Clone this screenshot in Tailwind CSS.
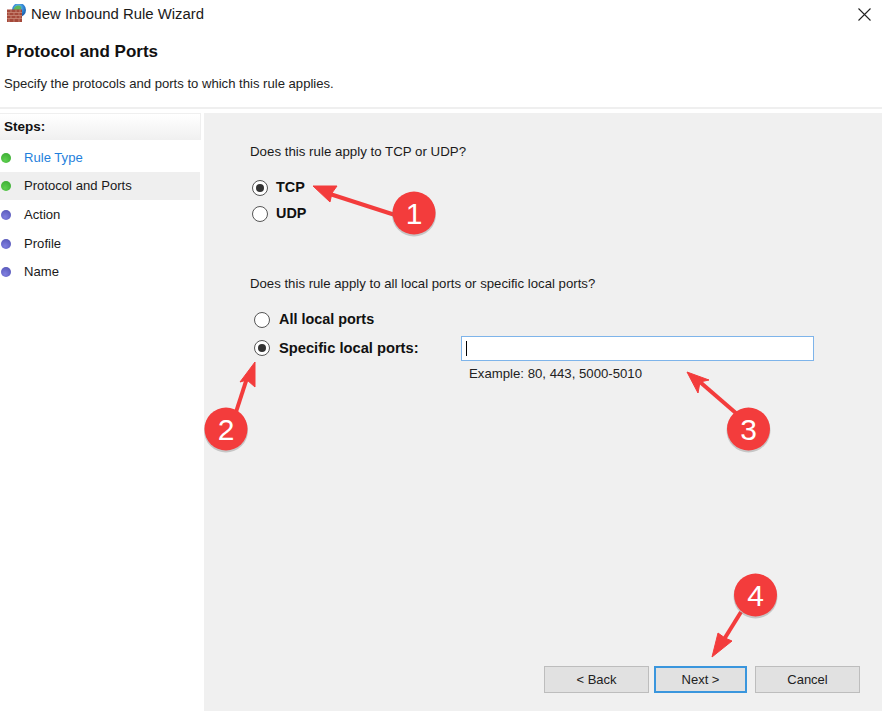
<!DOCTYPE html>
<html>
<head>
<meta charset="utf-8">
<script src="https://cdn.jsdelivr.net/npm/@tailwindcss/browser@4"></script>
</head>
<body class="bg-white">
<div class="relative w-[882px] h-[711px] overflow-hidden bg-white flex flex-col font-['Liberation_Sans',Arial,sans-serif] text-[#1a1a1a]">
  <!-- title bar -->
  <div class="h-[28px] shrink-0 flex items-center pl-[7px] pr-[11px]">
    <svg class="w-[20px] h-[20px] mr-[4px]" viewBox="0 0 20 20">
      <defs>
        <radialGradient id="globe" cx="45%" cy="35%" r="70%"><stop offset="0" stop-color="#7fd0f5"/><stop offset="0.6" stop-color="#2a7fd0"/><stop offset="1" stop-color="#17509a"/></radialGradient>
      </defs>
      <circle cx="12" cy="6" r="7" fill="url(#globe)"/>
      <path d="M8 3c2-2 5-2 6 0s-1 3-2.500 3.500S10 9 8 8s-1.500-3.500 0-5z" fill="#5cb85c"/>
      <rect x="0" y="5.500" width="15" height="12.500" fill="#a5493a"/>
      <path d="M0 8.500h15M0 11.500h15M0 14.500h15M4 5.500v3M9 5.500v3M13 5.500v3M2 8.500v3M7 8.500v3M12 8.500v3M4 11.500v3M9 11.500v3M13 11.500v3M2 14.500v3.500M7 14.500v3.500M12 14.500v3.500" stroke="#c98a78" stroke-width="0.800" fill="none"/>
    </svg>
    <span class="text-[14.9px] leading-none">New Inbound Rule Wizard</span>
    <svg class="ml-auto w-[13px] h-[13px]" viewBox="0 0 13 13"><path d="M.5.5l12 12M12.500.5L.5 12.500" stroke="#222" stroke-width="1.100" fill="none"/></svg>
  </div>
  <!-- header -->
  <div class="h-[81px] shrink-0 border-b-2 border-[#efefef] pl-[6px] pt-[14px]">
    <div class="text-[17px] leading-[20px] font-bold text-[#111]">Protocol and Ports</div>
    <div class="-ml-[2px] mt-[14px] text-[13.1px] leading-[16px] text-[#222]">Specify the protocols and ports to which this rule applies.</div>
  </div>
  <!-- body -->
  <div class="flex-1 flex pt-[4px] min-h-0">
    <!-- steps -->
    <div class="w-[204px] shrink-0 pr-[3px]">
      <div class="w-[201px] h-[27px] pl-[4px] flex items-center text-[13.5px] font-bold text-[#111] bg-gradient-to-b from-white to-[#f0f0f0] border-t border-r border-[#efefef]">Steps:</div>
      <div class="mt-[4px] flex flex-col text-[13.1px] w-[200px]">
        <div class="h-[28px] flex items-center pl-[1px]"><span class="w-[10px] h-[10px] rounded-full bg-[radial-gradient(circle_at_40%_70%,#5ed04f,#35a52e)] mr-[13px]"></span><span class="text-[#1f7fdc]">Rule Type</span></div>
        <div class="h-[28px] flex items-center pl-[1px] bg-[#efefef]"><span class="w-[10px] h-[10px] rounded-full bg-[radial-gradient(circle_at_40%_70%,#5ed04f,#35a52e)] mr-[13px]"></span><span>Protocol and Ports</span></div>
        <div class="h-[29px] flex items-center pl-[1px]"><span class="w-[10px] h-[10px] rounded-full bg-[radial-gradient(circle_at_40%_70%,#7f7fe0,#4f4fb0)] mr-[13px]"></span><span>Action</span></div>
        <div class="h-[29px] flex items-center pl-[1px]"><span class="w-[10px] h-[10px] rounded-full bg-[radial-gradient(circle_at_40%_70%,#7f7fe0,#4f4fb0)] mr-[13px]"></span><span>Profile</span></div>
        <div class="h-[28px] flex items-center pl-[1px]"><span class="w-[10px] h-[10px] rounded-full bg-[radial-gradient(circle_at_40%_70%,#7f7fe0,#4f4fb0)] mr-[13px]"></span><span>Name</span></div>
      </div>
    </div>
    <!-- main panel -->
    <div class="flex-1 bg-[#f0f0f0] flex flex-col pl-[46px] pt-[31px] relative">
      <div class="text-[13.3px] leading-[16px]">Does this rule apply to TCP or UDP?</div>
      <div class="mt-[20px] flex flex-col gap-[10px] pl-[2px]">
        <div class="h-[16px] flex items-center gap-[8px]">
          <span class="w-[16px] h-[16px] rounded-full bg-white border border-[#555] flex items-center justify-center"><span class="w-[8px] h-[8px] rounded-full bg-[#333]"></span></span>
          <span class="text-[14.4px] font-bold text-[#111]">TCP</span>
        </div>
        <div class="h-[16px] flex items-center gap-[8px]">
          <span class="w-[16px] h-[16px] rounded-full bg-white border border-[#555]"></span>
          <span class="text-[14.4px] font-bold text-[#111]">UDP</span>
        </div>
      </div>
      <div class="mt-[54px] text-[13.2px] leading-[16px]">Does this rule apply to all local ports or specific local ports?</div>
      <div class="mt-[20px] pl-[4px] flex flex-col">
        <div class="h-[16px] flex items-center gap-[9px]">
          <span class="w-[16px] h-[16px] rounded-full bg-white border border-[#555]"></span>
          <span class="text-[14.4px] font-bold text-[#111]">All local ports</span>
        </div>
        <div class="mt-[12px] h-[16px] flex items-center">
          <span class="w-[16px] h-[16px] rounded-full bg-white border border-[#555] flex items-center justify-center"><span class="w-[8px] h-[8px] rounded-full bg-[#333]"></span></span>
          <span class="ml-[9px] text-[14.7px] font-bold text-[#111] w-[182px]">Specific local ports:</span>
          <div class="w-[353px] h-[25px] shrink-0 bg-white border border-[#7eb4ea] flex items-center pl-[4px]"><span class="w-px h-[15px] bg-black"></span></div>
        </div>
        <div class="mt-[10px] ml-[215px] text-[13.2px] leading-[16px] text-[#222]">Example: 80, 443, 5000-5010</div>
      </div>
      <div class="absolute bottom-[18px] right-[22px] flex text-[13px] text-[#222]">
        <button class="w-[105px] h-[27px] bg-[#e1e1e1] border border-[#bdbdbd]">&lt; Back</button>
        <button class="ml-[5px] w-[93px] h-[27px] bg-[#e1e1e1] border-2 border-[#3a96dd]">Next &gt;</button>
        <button class="ml-[8px] w-[105px] h-[27px] bg-[#e1e1e1] border border-[#bdbdbd]">Cancel</button>
      </div>
    </div>
  </div>
  <!-- annotations -->
  <svg class="absolute inset-0 w-[882px] h-[711px] pointer-events-none" viewBox="0 0 882 711">
    <g fill="#f33c3c" stroke="#f33c3c" stroke-linejoin="round">
      <path d="M395 215L330 194" stroke-width="4" fill="none"/>
      <path d="M313 186L337 186L332 193L330 202Z" stroke-width="1"/>
      <path d="M236 412L248 375" stroke-width="4" fill="none"/>
      <path d="M255 362L255 387L247 380L240 382Z" stroke-width="1"/>
      <path d="M737 414L700 382" stroke-width="4" fill="none"/>
      <path d="M687 372L709 380L700 382L698 393Z" stroke-width="1"/>
      <path d="M741 612L723 641" stroke-width="4" fill="none"/>
      <path d="M712 657L718 633L725 638L732 641Z" stroke-width="1"/>
    </g>
    <g fill="#777" fill-opacity="0.35">
      <circle cx="414" cy="214.500" r="22"/><circle cx="226" cy="430.500" r="22"/><circle cx="748.500" cy="430.500" r="22"/><circle cx="755.500" cy="596.500" r="22"/>
    </g>
    <g fill="#f33c3c">
      <circle cx="414" cy="213" r="21.500"/><circle cx="226" cy="429" r="21.500"/><circle cx="748.500" cy="429" r="21.500"/><circle cx="755.500" cy="595" r="21.500"/>
    </g>
    <g fill="#fff" font-size="30" text-anchor="middle" font-family="'Liberation Sans',Arial,sans-serif">
      <text x="414" y="224">1</text><text x="226" y="440">2</text><text x="748.500" y="440">3</text><text x="755.500" y="606">4</text>
    </g>
  </svg>
</div>
</body>
</html>
